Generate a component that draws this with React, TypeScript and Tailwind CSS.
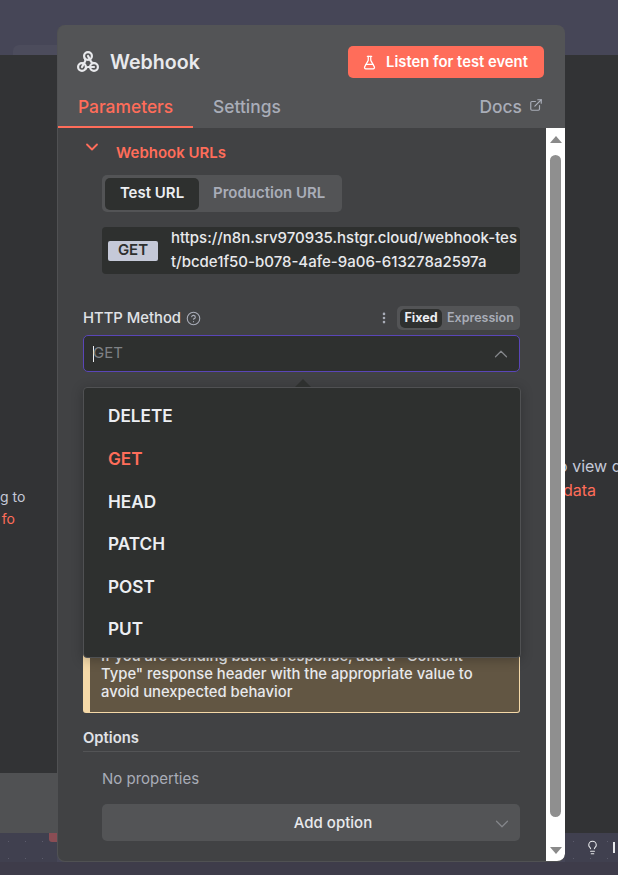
import { ChevronDown, ChevronUp, CircleHelp, EllipsisVertical, ExternalLink, FlaskConical, Lightbulb } from 'lucide-react'

const methods = ['DELETE', 'GET', 'HEAD', 'PATCH', 'POST', 'PUT']

function WebhookIcon() {
  return (
    <svg viewBox="0 0 24 24" className="-ml-px h-[24px] w-[24px]" fill="none" stroke="currentColor" strokeWidth={2.2} strokeLinecap="round" aria-hidden="true">
      <circle cx="6" cy="17" r="3.9" />
      <circle cx="12" cy="6" r="3.9" />
      <circle cx="18" cy="17" r="3.9" />
      <path d="M6 17l3.13-5.78c.53-.97.1-2.18-.5-3.1" />
      <path d="M12 6l3.13 5.73C15.66 12.7 16.9 13 18 13" />
      <path d="M18 16.98h-5.99c-1.1 0-1.95.94-2.48 1.9" />
    </svg>
  )
}

function Scrollbar() {
  return (
    <div className="absolute top-0 right-0 bottom-0 flex w-[19px] flex-col items-start rounded-br-[8px] bg-white pl-[4px]">
      <div className="mt-[8px] h-0 w-0 border-x-[6px] border-b-[7px] border-x-transparent border-b-[#8a8a8a]" />
      <div className="mt-[12px] h-[662px] w-[11px] rounded-[6px] bg-[#8f8f8f]" />
      <div className="mt-[30px] h-0 w-0 border-x-[6px] border-t-[7px] border-x-transparent border-t-[#8a8a8a]" />
    </div>
  )
}

function MethodDropdown() {
  return (
    <div className="absolute top-[52px] left-0 z-10 w-[438px]">
      <div className="absolute -top-[8px] left-[212px] h-0 w-0 border-x-[8px] border-b-[8px] border-x-transparent border-b-[#2e302f]" />
      <ul className="h-[271px] rounded-[4px] border border-[#505153] bg-[#2e302f] pt-[7px] shadow-[0_2px_12px_rgba(0,0,0,0.25)]">
        {methods.map((method) => (
          <li
            key={method}
            className={`flex h-[42.6px] items-center pl-[24px] text-[17.2px] font-semibold ${method === 'GET' ? 'text-[#ff6d5a]' : 'text-[#eceef2]'}`}
          >
            {method}
          </li>
        ))}
      </ul>
    </div>
  )
}

function ParametersPanel() {
  return (
    <div className="relative h-[734px] overflow-hidden bg-[#414244]">
      <div className="pr-[45px] pl-[25px]">
        <div className="flex h-[47px] items-start pt-[16px] text-[15px] leading-[18px] font-semibold text-[#ff6d5a]">
          <ChevronDown className="mt-[-7px] mr-[14px] ml-[-1px] h-[20px] w-[20px]" strokeWidth={2.2} />
          Webhook URLs
        </div>

        <div className="ml-[19px] flex h-[37px] w-[240px] items-center rounded-[5px] bg-[#535456] pl-[3px] text-[15px]">
          <div className="flex h-[32px] w-[94px] items-center justify-center rounded-[5px] bg-[#2e302f] font-semibold text-[#eceef2]">
            Test URL
          </div>
          <div className="ml-[14px] font-semibold text-[#a9adb8]">Production URL</div>
        </div>

        <div className="mt-[15px] ml-[19px] flex h-[47px] w-[418px] items-center rounded-[4px] bg-[#2e302f] pl-[6px]">
          <span className="flex h-[20px] w-[50px] shrink-0 items-center justify-center rounded-[2px] bg-[#c5c9d8] text-[15px] font-semibold text-[#2e302f]">
            GET
          </span>
          <span className="mb-[2px] ml-[13px] w-[346px] text-[15px] leading-[24px] font-medium break-all text-[#e8e9ec]">
            https://n8n.srv970935.hstgr.cloud/webhook-test/bcde1f50-b078-4afe-9a06-613278a2597a
          </span>
        </div>

        <div className="mt-[32px] flex h-[24px] items-center text-[14.8px] font-medium text-[#e0e2e7]">
          <span>HTTP Method</span>
          <CircleHelp className="ml-[5px] h-[15px] w-[15px] text-[#a9adb8]" strokeWidth={1.75} />
          <EllipsisVertical className="ml-auto h-[14px] w-[14px] text-[#a9adb8]" strokeWidth={2.5} />
          <div className="ml-[6px] flex h-[24px] w-[123px] items-center rounded-[5px] bg-[#535456] pl-[3px] text-[12.5px]">
            <span className="flex h-[19px] w-[42px] items-center justify-center rounded-[5px] bg-[#2e302f] font-bold text-[#eceef2]">
              Fixed
            </span>
            <span className="ml-[5px] font-semibold text-[#a9adb8]">Expression</span>
          </div>
        </div>

        <div className="relative mt-[5px]">
          <div className="flex h-[37px] items-center rounded-[5px] border border-[#5a46b8] bg-[#2e302f] pr-[7px] pl-[9px] text-[15px] text-[#7f8286]">
            <span className="mr-[-1px] h-[16px] w-px bg-[#eceef2]" />
            GET
            <ChevronUp className="ml-auto h-[22px] w-[22px] text-[#85878b]" strokeWidth={1.3} />
          </div>
          <MethodDropdown />
        </div>

        <div className="mt-[271px] rounded-[3px] border border-l-[7px] border-[#f5d9a8] bg-[#625643] pt-[3px] pr-[40px] pb-[11px] pl-[11px] text-[14.8px] leading-[18px] font-medium text-[#e8e9ec]">
          <p>
            If you are sending back a response, add a "Content-Type" response header with the appropriate value to avoid unexpected behavior
          </p>
        </div>

        <div className="mt-[16px] border-b border-[#535456] pt-[1px] pb-[4px] text-[14.8px] leading-[17px] font-semibold text-[#e0e2e7]">
          Options
        </div>
        <p className="mt-[17px] ml-[19px] text-[15px] leading-[20px] text-[#a9adb8]">No properties</p>
        <div className="relative mt-[15px] ml-[19px] flex h-[37px] items-center justify-center rounded-[5px] bg-[#535456] pt-[2px] pl-[44px] text-[15px] font-medium text-[#e8e9ec]">
          Add option
          <ChevronDown className="absolute right-[7px] h-[22px] w-[22px] text-[#85878b]" strokeWidth={1.3} />
        </div>
      </div>
      <Scrollbar />
    </div>
  )
}

function NodeModal() {
  return (
    <div className="h-[837px] w-[508px] overflow-hidden rounded-[8px] border border-t-0 border-r-0 border-[#505153] bg-[#535456]">
      <div className="flex h-[53px] items-end justify-between pr-[21px] pl-[19px]">
        <div className="mb-[1px] flex items-center text-[19.6px] font-semibold text-[#e8e9ec]">
          <WebhookIcon />
          <span className="ml-[10px]">Webhook</span>
        </div>
        <button className="flex h-[32px] w-[196px] items-center justify-center rounded-[5px] bg-[#ff6d5a] pt-[1px] pr-[2px] text-[14.8px] font-semibold text-white">
          <FlaskConical className="mr-[9px] h-[15px] w-[15px]" strokeWidth={2} />
          Listen for test event
        </button>
      </div>
      <div className="flex h-[50px] items-end pr-[22px] text-[17.4px] font-medium">
        <div className="h-[37px] w-[135px] border-b-2 border-[#ff6d5a] pt-[3px] pl-[20px] text-[#ff6d5a]">Parameters</div>
        <div className="ml-[20px] h-[37px] pt-[3px] text-[#a9adb8]">Settings</div>
        <div className="ml-auto flex h-[37px] items-start pt-[3px] text-[#a9adb8]">
          Docs
          <ExternalLink className="mt-[4px] ml-[7px] h-[14px] w-[14px]" strokeWidth={2} />
        </div>
      </div>
      <ParametersPanel />
    </div>
  )
}

export default function App() {
  return (
    <div className="h-[875px] w-[618px] overflow-hidden bg-[#3e3c4a] font-['Inter',sans-serif]">
      <div className="grid h-[862px] grid-cols-[57px_508px_53px] bg-[#464657]">
        <div className="flex flex-col pt-[45px]">
          <div className="ml-[13px] h-[10px] rounded-tl-[6px] bg-[#4c4c5c]" />
          <div className="h-[718px] overflow-hidden bg-[#323335] pt-[431px] text-right text-[14px] leading-[22px] whitespace-nowrap text-[#c5c9d8]">
            <p className="pr-[33px]">g to</p>
            <p className="pr-[42px] text-[#ff6d5a]">fo</p>
          </div>
          <div className="h-[60px] bg-[#505153]" />
          <div className="relative flex-1 bg-[#40404f] bg-[radial-gradient(circle,#5c5c6c_0.7px,transparent_1px)] bg-[size:17px_17px]">
            <div className="absolute top-0 right-0 h-[9px] w-[8px] rounded-bl-[3px] bg-[#8a4d54]" />
          </div>
        </div>

        <div className="relative z-10 pt-[25px]">
          <NodeModal />
        </div>

        <div className="flex flex-col pt-[55px]">
          <div className="h-[778px] overflow-hidden bg-[#323335] pt-[399px] text-[16px] leading-[24px] whitespace-nowrap text-[#c5c9d8]">
            <p className="ml-[-12px]">to view data</p>
            <p className="ml-[-2px] text-[#ff6d5a]">data</p>
          </div>
          <div className="flex flex-1 items-center bg-[#40404f] bg-[radial-gradient(circle,#5c5c6c_0.7px,transparent_1px)] bg-[size:17px_17px] pl-[20px] text-[#e8e9ec]">
            <Lightbulb className="h-[15px] w-[15px]" strokeWidth={1.75} />
            <span className="ml-[13px] h-[11px] w-[2px] bg-[#e8e9ec]" />
          </div>
        </div>
      </div>
    </div>
  )
}
